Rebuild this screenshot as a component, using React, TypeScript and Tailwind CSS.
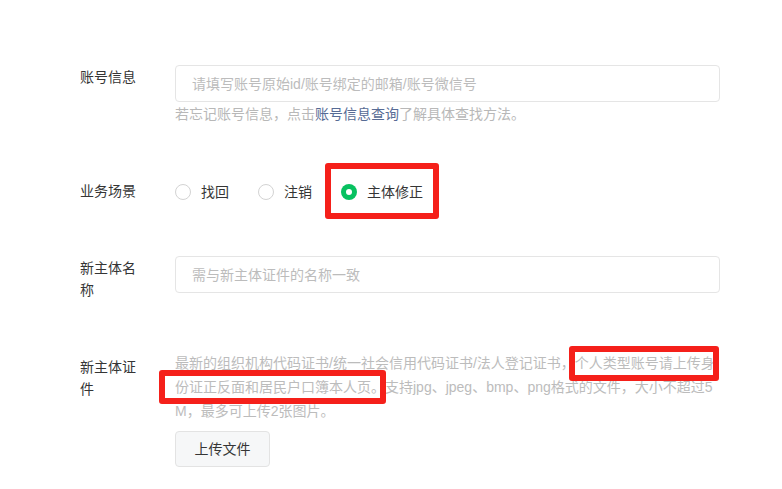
import React from 'react';

const font = { fontFamily: '"Liberation Sans", "Noto Sans CJK SC", sans-serif' };

type Option = { key: string; label: string };

const scenes: Option[] = [
  { key: 'recover', label: '找回' },
  { key: 'cancel', label: '注销' },
  { key: 'fix', label: '主体修正' },
];

function Radio({ checked, label }: { checked: boolean; label: string }) {
  return (
    <label className="flex items-center gap-[10px] cursor-pointer">
      {checked ? (
        <span className="w-4 h-4 rounded-full bg-[#07c160] flex items-center justify-center">
          <span className="w-[6px] h-[6px] rounded-full bg-white" />
        </span>
      ) : (
        <span className="w-4 h-4 rounded-full border border-[#d3d3d3] bg-white" />
      )}
      <span className="text-[14px] leading-[24px] text-[#353535]">{label}</span>
    </label>
  );
}

function Label({ children, className = '' }: { children: React.ReactNode; className?: string }) {
  return (
    <div className={`w-[95px] shrink-0 pr-[31px] text-[14px] leading-[22px] text-[#353535] ${className}`}>
      {children}
    </div>
  );
}

export default function App() {
  const scene = 'fix';

  return (
    <div className="relative w-[782px] h-[489px] bg-white overflow-hidden" style={font}>
      <div className="ml-[80px] pt-[65px] w-[640px]">
        {/* 账号信息 */}
        <div className="flex">
          <Label className="pt-[1px]">账号信息</Label>
          <div className="flex-1">
            <input
              className="w-full h-[37px] border border-[#e5e5e5] rounded-[4px] px-4 text-[14px] text-[#353535] placeholder:text-[#bcbcbc] outline-none"
              placeholder="请填写账号原始id/账号绑定的邮箱/账号微信号"
            />
            <p className="text-[14px] leading-[24px] text-[#b8b8b8]">
              若忘记账号信息，点击<a className="text-[#576b95]">账号信息查询</a>了解具体查找方法。
            </p>
          </div>
        </div>

        {/* 业务场景 */}
        <div className="flex items-center mt-[54px] h-[24px]">
          <Label className="-mt-[3px]">业务场景</Label>
          <div className="flex items-center gap-[29px]">
            {scenes.map((s) => (
              <Radio key={s.key} checked={s.key === scene} label={s.label} />
            ))}
          </div>
        </div>

        {/* 新主体名称 */}
        <div className="flex mt-[52px]">
          <Label className="pt-[1px]">新主体名称</Label>
          <div className="flex-1">
            <input
              className="w-full h-[37px] border border-[#e5e5e5] rounded-[4px] px-4 text-[14px] text-[#353535] placeholder:text-[#bcbcbc] outline-none"
              placeholder="需与新主体证件的名称一致"
            />
          </div>
        </div>

        {/* 新主体证件 */}
        <div className="flex mt-[50px]">
          <Label className="pt-[5px]">新主体证件</Label>
          <div className="flex-1">
            <p className="text-[14px] leading-[24px] text-[#bcbcbc] break-all">
              最新的组织机构代码证书/统一社会信用代码证书/法人登记证书，个人类型账号请上传身份证正反面和居民户口簿本人页。支持jpg、jpeg、bmp、png格式的文件，大小不超过5M，最多可上传2张图片。
            </p>
            <button className="mt-[8px] w-[95px] h-[36px] bg-[#f6f7f8] border border-[#e3e3e3] rounded-[4px] text-[14px] text-[#353535]">
              上传文件
            </button>
          </div>
        </div>
      </div>

      {/* 标注框 */}
      <div className="absolute left-[325px] top-[163px] w-[114px] h-[56px] border-[6px] border-[#f5201a] rounded-[3px]" />
      <div className="absolute left-[569px] top-[346px] w-[150px] h-[35px] border-[6px] border-[#f5201a] rounded-[3px]" />
      <div className="absolute left-[159px] top-[370px] w-[227px] h-[34px] border-[6px] border-[#f5201a] rounded-[3px]" />
    </div>
  );
}
